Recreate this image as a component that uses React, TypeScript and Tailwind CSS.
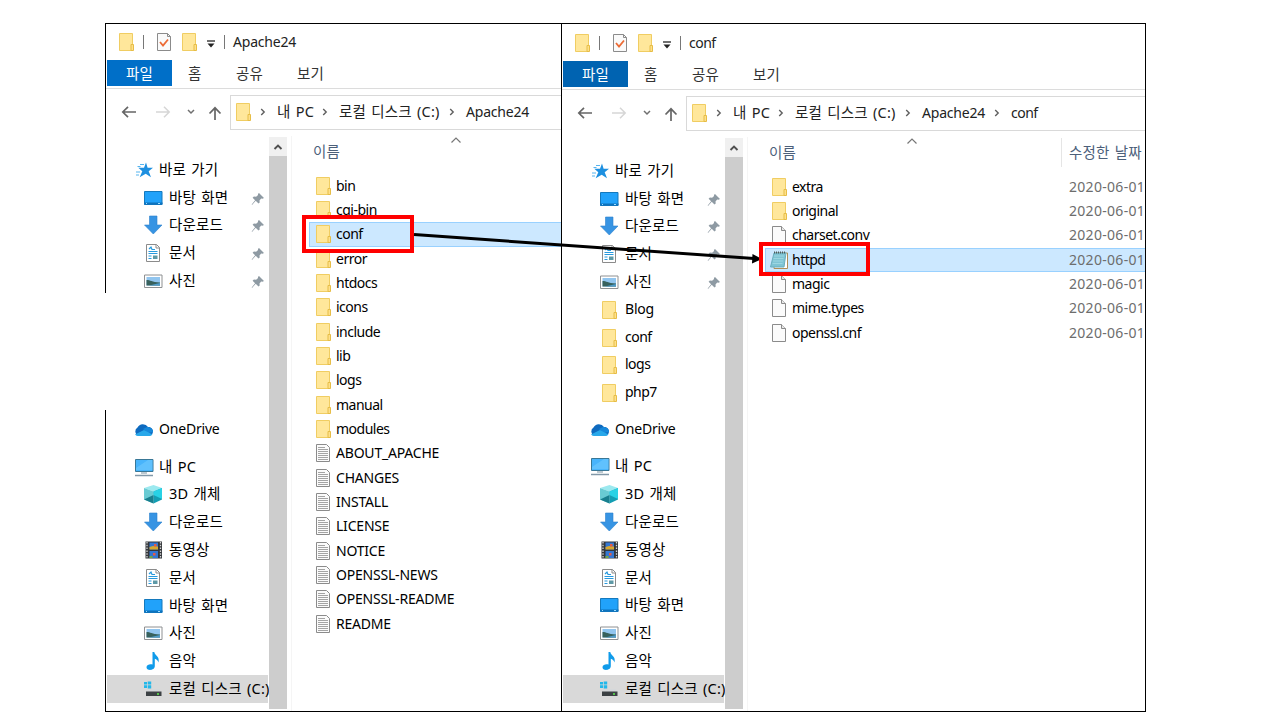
import React from 'react';
import clsx from 'clsx';

type IconName =
  | 'folder' | 'blank' | 'text' | 'notepad' | 'star' | 'desktop' | 'download' | 'document'
  | 'picture' | 'cloud' | 'pc' | 'cube' | 'video' | 'music' | 'drive';

interface SideItem {
  label: string;
  icon: IconName;
  level?: number;
  pinned?: boolean;
  selected?: boolean;
}

interface FileItem {
  name: string;
  icon: IconName;
  date?: string;
}

const quickAccess: SideItem[] = [
  { label: '바로 가기', icon: 'star', level: 0 },
  { label: '바탕 화면', icon: 'desktop', pinned: true },
  { label: '다운로드', icon: 'download', pinned: true },
  { label: '문서', icon: 'document', pinned: true },
  { label: '사진', icon: 'picture', pinned: true },
];

const recentFolders: SideItem[] = [
  { label: 'Blog', icon: 'folder' },
  { label: 'conf', icon: 'folder' },
  { label: 'logs', icon: 'folder' },
  { label: 'php7', icon: 'folder' },
];

const computer: SideItem[] = [
  { label: '내 PC', icon: 'pc', level: 0 },
  { label: '3D 개체', icon: 'cube' },
  { label: '다운로드', icon: 'download' },
  { label: '동영상', icon: 'video' },
  { label: '문서', icon: 'document' },
  { label: '바탕 화면', icon: 'desktop' },
  { label: '사진', icon: 'picture' },
  { label: '음악', icon: 'music' },
  { label: '로컬 디스크 (C:)', icon: 'drive', selected: true },
];

const apacheFiles: FileItem[] = [
  ...['bin', 'cgi-bin', 'conf', 'error', 'htdocs', 'icons', 'include', 'lib', 'logs', 'manual', 'modules'].map(
    (name) => ({ name, icon: 'folder' as IconName })
  ),
  ...['ABOUT_APACHE', 'CHANGES', 'INSTALL', 'LICENSE', 'NOTICE', 'OPENSSL-NEWS', 'OPENSSL-README', 'README'].map(
    (name) => ({ name, icon: 'text' as IconName })
  ),
];

const confFiles: FileItem[] = [
  { name: 'extra', icon: 'folder', date: '2020-06-01' },
  { name: 'original', icon: 'folder', date: '2020-06-01' },
  { name: 'charset.conv', icon: 'blank', date: '2020-06-01' },
  { name: 'httpd', icon: 'notepad', date: '2020-06-01' },
  { name: 'magic', icon: 'blank', date: '2020-06-01' },
  { name: 'mime.types', icon: 'blank', date: '2020-06-01' },
  { name: 'openssl.cnf', icon: 'blank', date: '2020-06-01' },
];

const shapes: Record<IconName, React.ReactNode> = {
  folder: (
    <>
      <path d="M3.500 1.500h13v17h-13z" fill="#ffe79b" stroke="#f0cd62" />
      <path d="M15 18.500v-6h2.500v6z" fill="#ffe08a" stroke="#e6bd47" />
    </>
  ),
  blank: (
    <>
      <path d="M3.500 1.500h9l4 4v13h-13z" fill="#fbfbfb" stroke="#8b8b8b" />
      <path d="M12.500 1.500v4h4" fill="#e8e8e8" stroke="#8b8b8b" />
    </>
  ),
  text: (
    <>
      <path d="M3.500 1.500h10l3 3v14h-13z" fill="#fbfbfb" stroke="#8b8b8b" />
      <path d="M5 4.500h7M5 6.500h10M5 8.500h10M5 10.500h10M5 12.500h10M5 14.500h10M5 16.500h10" stroke="#a4a4a4" />
    </>
  ),
  notepad: (
    <>
      <path d="M6 3h12.500v15.500H5z" fill="#fff" stroke="#b08d55" />
      <path d="M5 3h12l-2 14H1.500z" fill="#7fc4d4" stroke="#6aaebd" />
      <path d="M5 6h10M4.500 8.500h10M4 11h10M3.500 13.500h10" stroke="#a9dfe8" strokeWidth=".7" />
      <path d="M5 2.500h12" stroke="#4c5b60" strokeWidth="2" strokeDasharray="1 1" />
    </>
  ),
  star: (
    <>
      <path d="M12 2.500l1.600 5.200h5.400l-4.300 3.500 2.300 6-5.300-3.500-6 3.500 2.600-6-4-3.500h5.700z" fill="#1e90e0" />
      <path d="M6 4.500h4M3.500 6.500h3M2 12h4M2 15h3" stroke="#55b4ef" />
    </>
  ),
  desktop: (
    <>
      <path d="M1.500 3.500h17.500v13H1.500z" fill="#21a2fa" stroke="#1479bd" />
      <path d="M1 15.500h18.500" stroke="#0e73bd" strokeWidth="2" />
      <path d="M3 15.500h1M15 15.500h2" stroke="#9bdcff" />
    </>
  ),
  download: <path d="M6.500 1h7.500v9h5l-8.700 9L1.500 10h5z" fill="#3794e3" stroke="#2d82cc" strokeWidth=".6" />,
  document: (
    <>
      <path d="M3.500 1.500h10l3 3v14h-13z" fill="#fff" stroke="#8b8b8b" />
      <path d="M13 1.500v3.500h3.500" fill="none" stroke="#8b8b8b" />
      <path d="M6 6l2-2 1 2.500h3M5.500 8.500h9M5.500 10.500h9M5.500 13h3M5.500 15.500h3" stroke="#289ade" strokeWidth="1.200" fill="none" />
      <path d="M10 12.500h4.500v3.500H10z" fill="#5e99a6" />
    </>
  ),
  picture: (
    <>
      <path d="M1.500 4h17.500v12.500H1.500z" fill="#fff" stroke="#8e9092" />
      <path d="M3.500 6h13.500v8.500H3.500z" fill="#91c5ef" />
      <path d="M3.500 9c4 0 5 2 13.500 2.500v3H3.500z" fill="#37615d" />
      <path d="M6 14.500l11-2.500v2.500z" fill="#4f9ccb" />
    </>
  ),
  cloud: (
    <>
      <path d="M4 15.500a4.500 4.500 0 0 1-.5-8A6 6 0 0 1 14 7c3 0 5 2 5 4.500s-2 4-4 4z" fill="#0e6abf" />
      <path d="M9 9l4-2c4 0 6 2.500 6 5l-5 1z" fill="#1688da" />
      <path d="M1 14.500L10 10l8.500 4.500c-1 1-2 1.500-3 1.500H4c-1 0-2-.5-3-1.500z" fill="#28a8ea" />
    </>
  ),
  pc: (
    <>
      <path d="M1.500 2.500h17.500v12H1.500z" fill="#48b4fb" stroke="#397796" />
      <path d="M2 11L14 3h4.500v10H2z" fill="#72c9ff" opacity=".6" />
      <path d="M7 15h6v2H7z" fill="#bcc8cf" />
      <path d="M1 18.500h18" stroke="#8298a8" strokeWidth="1.500" />
    </>
  ),
  cube: (
    <>
      <path d="M1 4l9.500-3L19 4l-8.500 3.500z" fill="#9ce9ef" />
      <path d="M1 4l9.500 3.500V19.500L1 15.500z" fill="#69cbd3" />
      <path d="M10.500 7.500L19 4v11.500l-8.500 4z" fill="#139eb3" />
      <path d="M1 15.500l9.500-4.500v8.500z" fill="#197f8e" />
      <path d="M10.500 7.500L19 4v11l-8.500-4z" fill="#28d2e5" />
    </>
  ),
  video: (
    <>
      <path d="M2.500 1.500h16.500v17H2.500z" fill="#33363a" />
      <path d="M4 2v16M17.500 2v16" stroke="#d4d4d4" strokeWidth="1.300" strokeDasharray="1.500 1.300" />
      <path d="M6.500 2.500h8.500v7H6.500zM6.500 11h8.500v7H6.500z" fill="#3477d2" />
      <path d="M6.500 7l3.500-1 5 .5v3H6.500z" fill="#d7a72d" />
      <path d="M11 4h2.500v2.500H11zM10 13h2.500v2.500H10z" fill="#e45a47" />
      <path d="M6.500 16h3v2h-3z" fill="#76a641" />
    </>
  ),
  music: (
    <path d="M9.500 1h1.800c.4 3.500 5.700 4 4.200 10.500-.7-2-2-3.200-3.700-3.700V15c0 5-8.800 5-8.300 1 .4-2.500 3.500-3.300 6-2.500z" fill="#109bea" />
  ),
  drive: (
    <>
      <path d="M1 3h3v2.500H1zM4.700 2.500h3.500v3H4.700zM1 6.200h3V9H1zM4.700 6.200h3.500v3.300H4.700z" fill="#22b8ea" />
      <path d="M4.500 10h12l1.500 3H3z" fill="#d5d8da" />
      <path d="M3 12.500h15.500v4.500H3z" fill="#3c4144" />
      <path d="M14 15h2" stroke="#5dec4e" strokeWidth="1.500" />
    </>
  ),
};

const Icon: React.FC<{ name: IconName; className?: string }> = ({ name, className }) => (
  <svg viewBox="0 0 20 20" fill="none" className={clsx('h-5 w-5 shrink-0', className)}>
    {shapes[name]}
  </svg>
);

// Hangul, dates, capitals and lowercase names each get their own tracking
const fontFor = (text: string) => {
  if (/[가-힣]/.test(text)) return 'text-[14.5px] tracking-[0.2px] [word-spacing:1.2px]';
  if (/^\d{4}-/.test(text)) return 'text-[14px] tracking-[0.3px]';
  if (/^[A-Z]/.test(text)) return 'text-[14px] tracking-[-0.2px]';
  return 'text-[14px] tracking-[-0.5px]';
};

const Label: React.FC<{ text: string; className?: string }> = ({ text, className }) => (
  <span className={clsx('shrink-0 whitespace-nowrap', fontFor(text), className)}>{text}</span>
);

const Pin = () => (
  <svg viewBox="0 0 14 14" className="h-3.5 w-3.5">
    <path d="M8 1l5 5-1.500.7-1.300-.3-1.700 2 .2 2-1.200 1.200L4.700 8.800 1 13l-.3-.4 3.400-4.400-2.500-2.500 1.300-1.200 2.200.2 2-1.800L6.900 2z" fill="#8e9aa3" />
  </svg>
);

const Crumb: React.FC<{ text: string; width: string }> = ({ text, width }) => (
  <>
    <svg viewBox="0 0 6 8" className="ml-[10px] mr-[10px] h-2 w-1.5 shrink-0">
      <path d="M1.200 1l3 3-3 3" fill="none" stroke="#5f5f5f" strokeWidth="1.400" />
    </svg>
    <span className={clsx('-mt-px shrink-0 pl-px', width)}>
      <Label text={text} className="text-[#222]" />
    </span>
  </>
);

const SideRow: React.FC<{ item: SideItem }> = ({ item }) => (
  <div
    className={clsx(
      'flex h-[27.8px] w-[161px] shrink-0 items-center',
      item.level === 0 ? 'pl-[27px]' : 'pl-9',
      item.selected && 'bg-[#d9d9d9]'
    )}
  >
    <Icon name={item.icon} />
    <Label text={item.label} className={clsx('-mt-0.5', item.level === 0 ? 'ml-[5px]' : 'ml-[6px]')} />
    {item.pinned && (
      <span className="ml-auto mt-0.5 pr-[3px]">
        <Pin />
      </span>
    )}
  </div>
);

interface ExplorerProps {
  title: string;
  tabColor: string;
  crumbs: { text: string; width: string }[];
  groups: SideItem[];
  spacer: string;
  files: FileItem[];
  active: string;
  showDate?: boolean;
}

const Explorer: React.FC<ExplorerProps> = ({ title, tabColor, crumbs, groups, spacer, files, active, showDate }) => (
  <div className="flex min-h-0 min-w-0 flex-1 flex-col">
    <div className="flex h-9 shrink-0 items-center pl-[10px]">
      <Icon name="folder" className="-mt-px" />
      <span className="-mt-px ml-[7px] h-3.5 w-px bg-[#777]" />
      <svg viewBox="0 0 16 20" className="ml-[12px] h-5 w-4" fill="none">
        <path d="M1.500 1.500h10l3 3v14h-13z" fill="#fafafa" stroke="#8b8b8b" />
        <path d="M11.500 1.500v3h3" stroke="#8b8b8b" />
        <path d="M4 10l3 3.500 5-6" stroke="#ec6b35" strokeWidth="1.800" />
      </svg>
      <Icon name="folder" className="ml-[7px]" />
      <svg viewBox="0 0 10 8" className="ml-[7px] mt-1 h-2 w-2.5">
        <path d="M1 1h8" stroke="#222" strokeWidth="1.300" />
        <path d="M1.500 3.500h7L5 7.500z" fill="#222" />
      </svg>
      <span className="-mt-px ml-[8px] h-3.5 w-px bg-[#777]" />
      <Label text={title} className="ml-2 text-[#222]" />
    </div>

    <div className="flex h-[29px] shrink-0 border-b border-[#dcdcdc] pb-[2px] pl-px text-[#333]">
      <div className={clsx('flex w-[65px] items-center justify-center text-white', tabColor)}>
        <Label text="파일" className="-mt-px" />
      </div>
      <div className="-mt-px flex items-center pl-4">
        <Label text="홈" className="w-[48px]" />
        <Label text="공유" className="w-[61px]" />
        <Label text="보기" />
      </div>
    </div>

    <div className="flex h-[47px] shrink-0 pt-[6px]">
      <div className="-mt-px flex h-[35px] w-[124px] shrink-0 items-center pl-[15px]">
        <svg viewBox="0 0 16 14" className="h-3.5 w-4" fill="none" stroke="#666" strokeWidth="1.700">
          <path d="M15 7H2M7 1.800L1.800 7 7 12.200" />
        </svg>
        <svg viewBox="0 0 16 14" className="ml-[18px] h-3.5 w-4" fill="none" stroke="#d6d6d6" strokeWidth="1.500">
          <path d="M1 7h13M9 1.800L14.200 7 9 12.200" />
        </svg>
        <svg viewBox="0 0 8 6" className="ml-4 h-1.5 w-2" fill="none" stroke="#707070" strokeWidth="1.500">
          <path d="M1 1l3 3 3-3" />
        </svg>
        <svg viewBox="0 0 14 14" className="ml-[13px] mt-[3px] h-3.5 w-3.5" fill="none" stroke="#666" strokeWidth="1.700">
          <path d="M7 14V2M1.500 7.500L7 1.800l5.500 5.700" />
        </svg>
      </div>
      <div className="flex h-[35px] min-w-0 flex-1 items-center overflow-hidden border-y border-l border-[#d9d9d9] pb-[2px] pl-[2px]">
        <Icon name="folder" className="-mr-[3px]" />
        {crumbs.map((crumb) => (
          <Crumb key={crumb.text} {...crumb} />
        ))}
      </div>
    </div>

    <div className="flex min-h-0 flex-1">
      <div className="flex w-[163.300px] shrink-0 flex-col pl-px pt-[20px]">
        {groups.map((item) => (
          <SideRow key={item.label} item={item} />
        ))}
        <div className={clsx('shrink-0', spacer)} />
        <SideRow item={{ label: 'OneDrive', icon: 'cloud', level: 0 }} />
        <div className="h-[9px] shrink-0" />
        {computer.map((item) => (
          <SideRow key={item.label} item={item} />
        ))}
      </div>

      <div className="mb-[2px] mt-[1px] w-[17.700px] shrink-0 bg-[#cdcdcd]">
        <div className="flex h-[19px] items-center justify-center bg-[#f0f0f0] pt-px">
          <svg viewBox="0 0 10 8" className="h-2 w-2.5" fill="none" stroke="#505050" strokeWidth="1.900">
            <path d="M1.500 6L5 2.500 8.500 6" />
          </svg>
        </div>
      </div>
      <div className="ml-1 w-px shrink-0 bg-[#f5f5f5]" />

      <div className="flex min-w-0 flex-1 flex-col overflow-hidden pl-[17px]">
        <div className="flex h-[37.600px] shrink-0 text-[#4c607a]">
          <Label text="이름" className="ml-1 mt-[5px] w-[138px]" />
          <svg viewBox="0 0 10 6" className="mt-[1px] h-1.5 w-2.5 shrink-0" fill="none" stroke="#777" strokeWidth="1.200">
            <path d="M.5 5.500L5 1l4.500 4.500" />
          </svg>
          {showDate && (
            <div className="ml-[144px] mt-[1px] h-[29px] border-l border-[#e5e5e5] pl-[7px] pt-1">
              <Label text="수정한 날짜" />
            </div>
          )}
        </div>
        {files.map((file) => (
          <div
            key={file.name}
            className={clsx(
              'flex h-[24.330px] shrink-0 items-center border-y border-l pl-[3px]',
              file.name === active ? 'border-[#99d1ff] bg-[#cce8ff]' : 'border-transparent'
            )}
          >
            <Icon name={file.icon} />
            <Label text={file.name} className="ml-[3px] w-[277px]" />
            {file.date && <Label text={file.date} className="text-[#6d6d6d]" />}
          </div>
        ))}
      </div>
    </div>
  </div>
);

const App: React.FC = () => {
  return (
    <div
      className="relative h-[720px] w-[1280px] overflow-hidden bg-white pl-[105px] pt-[23px] text-black"
      style={{ fontFamily: '"Noto Sans", "Noto Sans CJK KR", sans-serif' }}
    >
      <div className="flex h-[689px] w-[1041px] border-y border-r border-black leading-5">
        <div className="flex w-[456px] shrink-0 border-l border-black">
          <Explorer
            title="Apache24"
            tabColor="bg-[#006fc8]"
            crumbs={[
              { text: '내 PC', width: 'w-[36px]' },
              { text: '로컬 디스크 (C:)', width: 'w-[101px]' },
              { text: 'Apache24', width: 'w-[63px]' },
            ]}
            groups={quickAccess}
            spacer="h-[121px]"
            files={apacheFiles}
            active="conf"
          />
        </div>
        <div className="flex min-w-0 flex-1 border-l border-black pt-px">
          <Explorer
            title="conf"
            tabColor="bg-[#0063b1]"
            crumbs={[
              { text: '내 PC', width: 'w-[36px]' },
              { text: '로컬 디스크 (C:)', width: 'w-[101px]' },
              { text: 'Apache24', width: 'w-[63px]' },
              { text: 'conf', width: 'w-[30px]' },
            ]}
            groups={[...quickAccess, ...recentFolders]}
            spacer="h-[8.500px]"
            files={confFiles}
            active="httpd"
            showDate
          />
        </div>
      </div>

      {/* gap in the left window edge */}
      <div className="absolute left-[105px] top-[293px] h-[117px] w-px bg-white" />

      {/* annotations */}
      <div className="absolute left-[302px] top-[215px] h-[38px] w-[112px] border-4 border-[#ff0000]" />
      <svg className="absolute left-0 top-0 h-[720px] w-[1280px]" viewBox="0 0 1280 720">
        <path d="M414 234.500L754 258.500" stroke="#000" strokeWidth="3" />
        <path d="M752.500 254l9.500 5-10 4.500z" fill="#000" />
      </svg>
      <div className="absolute left-[759px] top-[242px] h-[34px] w-[111px] border-4 border-[#ff0000]" />
    </div>
  );
};

export default App;
